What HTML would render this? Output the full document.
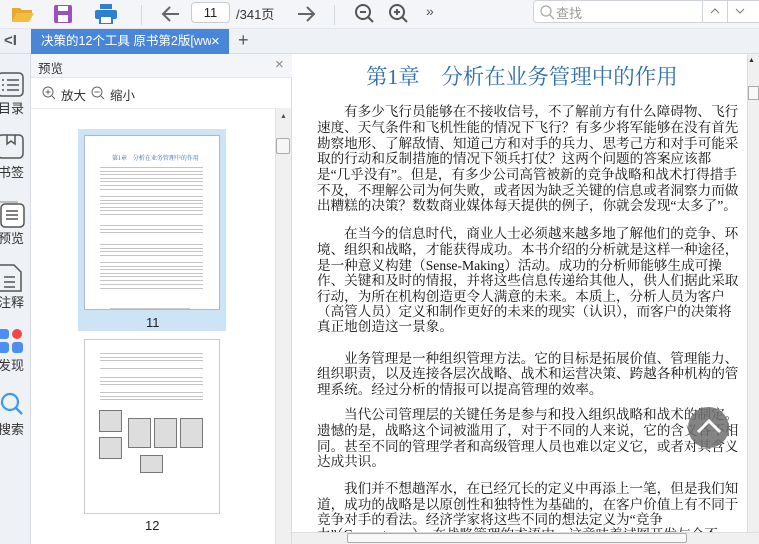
<!DOCTYPE html>
<html><head><meta charset="utf-8"><style>
*{margin:0;padding:0;box-sizing:border-box}
body{width:759px;height:544px;overflow:hidden;background:#fff;position:relative;font-family:"Liberation Sans","Noto Sans CJK SC",sans-serif}
.abs{position:absolute}
#tb{left:0;top:0;width:759px;height:29px;background:#f3f5f8;border-bottom:1px solid #e3e6ea}
#tabs{left:0;top:29px;width:759px;height:25px;background:#eef1f5;border-bottom:1px solid #d8dce2}
#side{left:0;top:54px;width:31px;height:490px;background:#eef1f5;border-right:1px solid #d8dce2}
#prev{left:31px;top:54px;width:261px;height:490px;background:#fff;border-right:1px solid #d8dce2}
.sl{position:absolute;left:-4px;width:30px;font-size:13px;color:#333;text-align:center}
.doc{position:absolute;left:317px;width:411px;font-family:"Liberation Serif","Noto Serif CJK SC",serif;font-size:13.6px;color:#111;white-space:nowrap;text-align:justify;text-align-last:justify;line-height:16px;overflow:visible}
.doc.e{text-align-last:left}
.doc.i{left:344px;width:384px}
.tl{position:absolute;height:1px;background:#bbb}
</style></head><body>
<div id="tb" class="abs"></div>
<svg class="abs" style="left:11px;top:5px" width="24" height="18"><path d="M1 3h8l2 2h10v3H6L1 17z" fill="#e8a930"/><path d="M6 8h17l-5 9H1z" fill="#f5bd3f"/></svg>
<svg class="abs" style="left:54px;top:5px" width="18" height="18"><rect x="0" y="0" width="18" height="18" rx="2" fill="#9a52c0"/><rect x="4" y="1" width="10" height="5" fill="#fff"/><rect x="4" y="10" width="10" height="7" fill="#fff"/></svg>
<svg class="abs" style="left:95px;top:4px" width="22" height="20"><rect x="5" y="0" width="12" height="5" fill="#2f7fd0"/><rect x="0" y="6" width="22" height="9" rx="2" fill="#2f7fd0"/><rect x="5" y="12" width="12" height="8" fill="#fff" stroke="#2f7fd0" stroke-width="2"/></svg>
<div class="abs" style="left:141px;top:5px;width:1px;height:20px;background:#d5d8dc"></div>
<svg class="abs" style="left:161px;top:5px" width="20" height="18"><path d="M18 9H3M9 2L2 9l7 7" stroke="#666" stroke-width="2" fill="none"/></svg>
<div class="abs" style="left:191px;top:2px;width:39px;height:21px;border:1px solid #c8ccd2;border-radius:4px;background:#fff;font-size:13px;text-align:center;line-height:19px;color:#222">11</div>
<div class="abs" style="left:236px;top:4px;font-size:13px;color:#333">/341页</div>
<svg class="abs" style="left:296px;top:5px" width="20" height="18"><path d="M2 9h15M11 2l7 7-7 7" stroke="#666" stroke-width="2" fill="none"/></svg>
<div class="abs" style="left:334px;top:5px;width:1px;height:20px;background:#d5d8dc"></div>
<svg class="abs" style="left:354px;top:3px" width="22" height="22"><circle cx="9" cy="9" r="7" stroke="#555" stroke-width="2" fill="none"/><path d="M6 9h6M14 14l5 5" stroke="#555" stroke-width="2"/></svg>
<svg class="abs" style="left:388px;top:3px" width="22" height="22"><circle cx="9" cy="9" r="7" stroke="#555" stroke-width="2" fill="none"/><path d="M6 9h6M9 6v6M14 14l5 5" stroke="#555" stroke-width="2"/></svg>
<div class="abs" style="left:426px;top:3px;font-size:14px;color:#555">»</div>
<div class="abs" style="left:533px;top:0;width:240px;height:23px;border:1px solid #cfd3d8;border-radius:4px;background:#fff"></div>
<svg class="abs" style="left:539px;top:4px" width="16" height="16"><circle cx="7" cy="7" r="5" stroke="#aaa" stroke-width="1.3" fill="none"/><path d="M11 11l4 4" stroke="#aaa" stroke-width="1.3"/></svg>
<div class="abs" style="left:556px;top:3px;font-size:13px;color:#999">查找</div>
<div class="abs" style="left:702px;top:0;width:1px;height:23px;background:#cfd3d8"></div>
<div class="abs" style="left:727px;top:0;width:1px;height:23px;background:#cfd3d8"></div>
<svg class="abs" style="left:710px;top:7px" width="10" height="8"><path d="M1 6l4-4 4 4" stroke="#777" fill="none"/></svg>
<svg class="abs" style="left:735px;top:7px" width="10" height="8"><path d="M1 2l4 4 4-4" stroke="#777" fill="none"/></svg>

<div id="tabs" class="abs"></div>
<div class="abs" style="left:4px;top:32px;font-size:15px;color:#555;font-weight:bold">&lt;I</div>
<div class="abs" style="left:31px;top:29px;width:198px;height:25px;background:#4a86d8;color:#fff;font-size:12.5px;line-height:25px;padding-left:10px;white-space:nowrap;overflow:hidden">决策的12个工具 原书第2版[www<span style="position:absolute;left:180px;top:0;background:#4a86d8;width:18px;font-size:15px">×</span></div>
<div class="abs" style="left:238px;top:30px;font-size:18px;color:#555">+</div>

<div id="side" class="abs"></div>
<svg class="abs" style="left:0;top:72px" width="24" height="26"><rect x="-2" y="1" width="25" height="23" rx="4" stroke="#555" stroke-width="1.5" fill="none"/><path d="M2 8h2M7 8h12M2 13h2M7 13h12M2 18h2M7 18h12" stroke="#555" stroke-width="1.6"/></svg>
<div class="sl" style="top:98px">目录</div>
<svg class="abs" style="left:0;top:134px" width="24" height="26"><rect x="-2" y="1" width="25" height="23" rx="4" stroke="#555" stroke-width="1.5" fill="none"/><path d="M7 1v9l4-3 4 3V1" stroke="#555" stroke-width="1.5" fill="none"/></svg>
<div class="sl" style="top:162px">书签</div>
<svg class="abs" style="left:0;top:200px" width="26" height="28"><rect x="1" y="4" width="23" height="23" rx="4" stroke="#555" stroke-width="1.5" fill="#fff"/><path d="M-2 2h20" stroke="#888"/><path d="M6 11h12M6 15h12M6 19h12" stroke="#555" stroke-width="1.6"/></svg>
<div class="sl" style="top:228px">预览</div>
<svg class="abs" style="left:0;top:264px" width="24" height="30"><path d="M-1 1h15l7 7v19h-22z" stroke="#555" stroke-width="1.5" fill="none"/><path d="M4 13h11M4 18h11M4 23h11" stroke="#555" stroke-width="1.5"/></svg>
<div class="sl" style="top:292px">注释</div>
<svg class="abs" style="left:0;top:327px" width="26" height="28"><rect x="-2" y="2" width="11" height="10" rx="3" fill="#4d8ef0"/><circle cx="17" cy="7" r="5" fill="#f04848"/><rect x="-2" y="15" width="11" height="11" rx="3" fill="#4d8ef0"/><rect x="12" y="15" width="11" height="11" rx="3" fill="#4d8ef0"/></svg>
<div class="sl" style="top:355px">发现</div>
<svg class="abs" style="left:0;top:392px" width="26" height="26"><circle cx="10" cy="10" r="8" stroke="#3d9be9" stroke-width="2.2" fill="none"/><path d="M16 16l6 6" stroke="#3d9be9" stroke-width="2.5"/></svg>
<div class="sl" style="top:419px">搜索</div>

<div id="prev" class="abs"></div>
<div class="abs" style="left:31px;top:54px;width:261px;height:24px;background:#f3f5f8;border-bottom:1px solid #e3e6ea"></div>
<div class="abs" style="left:38px;top:58px;font-size:12.5px;color:#333">预览</div>
<div class="abs" style="left:275px;top:56px;font-size:15px;color:#888">×</div>
<svg class="abs" style="left:42px;top:86px" width="14" height="14"><circle cx="6" cy="6" r="5" stroke="#666" fill="none"/><path d="M3.5 6h5M6 3.5v5M10 10l3 3" stroke="#666"/></svg>
<div class="abs" style="left:61px;top:85px;font-size:12.5px;color:#333">放大</div>
<svg class="abs" style="left:91px;top:86px" width="14" height="14"><circle cx="6" cy="6" r="5" stroke="#666" fill="none"/><path d="M3.5 6h5M10 10l3 3" stroke="#666"/></svg>
<div class="abs" style="left:110px;top:85px;font-size:12.5px;color:#333">缩小</div>
<div class="abs" style="left:31px;top:108px;width:244px;height:1px;background:#e8e8e8"></div>
<div class="abs" style="left:275px;top:108px;width:16px;height:436px;background:#f0f0f0;border-left:1px solid #e0e0e0"></div>
<div class="abs" style="left:280px;top:113px;font-size:7px;color:#555">▲</div>
<div class="abs" style="left:276px;top:138px;width:14px;height:16px;background:#f6f6f6;border:1px solid #aaa;border-radius:2px"></div>

<div class="abs" style="left:78px;top:129px;width:148px;height:202px;background:#cde4f7"></div>
<div class="abs" style="left:84px;top:135px;width:136px;height:175px;background:#fff;border:1px solid #b0b8c4"></div>
<div class="abs" style="left:112px;top:153px;font-size:6px;color:#2f6fad;font-family:'Noto Serif CJK SC',serif">第1章　分析在业务管理中的作用</div>
<div class="abs" style="left:146px;top:315px;font-size:13px;color:#222">11</div>
<div class="abs" style="left:84px;top:339px;width:136px;height:175px;background:#fff;border:1px solid #c8ccd2"></div>
<div class="abs" style="left:145px;top:518px;font-size:13px;color:#222">12</div>
<div id="thumb"></div>
<script>
var t='';
function lines(x,y,n,w,step,col){for(var i=0;i<n;i++){t+='<div class="tl" style="left:'+x+'px;top:'+(y+i*step)+'px;width:'+w+'px;background:'+(col||'#c4c4c4')+'"></div>';}}
[[167,7],[196,6],[225,3],[244,4],[262,6],[284,2]].forEach(function(a){lines(100,a[0],a[1],103,3.6);});
lines(110,308,1,80,3,'#ccc');
[[353,3],[368,1],[377,3],[392,3]].forEach(function(a){lines(100,a[0],a[1],103,3.6);});
document.getElementById('thumb').innerHTML=t;
</script>
<div class="abs" style="left:99px;top:410px;width:23px;height:22px;border:1px solid #777;background:#ddd"></div>
<div class="abs" style="left:99px;top:437px;width:23px;height:22px;border:1px solid #777;background:#ddd"></div>
<div class="abs" style="left:128px;top:418px;width:23px;height:30px;border:1px solid #777;background:#ddd"></div>
<div class="abs" style="left:154px;top:418px;width:23px;height:30px;border:1px solid #777;background:#ddd"></div>
<div class="abs" style="left:180px;top:418px;width:23px;height:30px;border:1px solid #777;background:#ddd"></div>
<div class="abs" style="left:140px;top:455px;width:23px;height:18px;border:1px solid #777;background:#ddd"></div>

<div class="abs" style="left:292px;top:54px;width:467px;height:490px;background:#fff"></div>
<div class="abs" style="left:366px;top:60px;font-family:'Liberation Serif','Noto Serif CJK SC',serif;font-size:21.5px;color:#2f6fad;white-space:nowrap">第1章　分析在业务管理中的作用</div>
<div class="doc i" style="top:104px">有多少飞行员能够在不接收信号，不了解前方有什么障碍物、飞行</div>
<div class="doc" style="top:120px">速度、天气条件和飞机性能的情况下飞行？有多少将军能够在没有首先</div>
<div class="doc" style="top:136px">勘察地形、了解敌情、知道己方和对手的兵力、思考己方和对手可能采</div>
<div class="doc e" style="top:151px">取的行动和反制措施的情况下领兵打仗？这两个问题的答案应该都</div>
<div class="doc" style="top:167px">是“几乎没有”。但是，有多少公司高管被新的竞争战略和战术打得措手</div>
<div class="doc" style="top:183px">不及，不理解公司为何失败，或者因为缺乏关键的信息或者洞察力而做</div>
<div class="doc e" style="top:198px">出糟糕的决策？数数商业媒体每天提供的例子，你就会发现“太多了”。</div>
<div class="doc i" style="top:226px">在当今的信息时代，商业人士必须越来越多地了解他们的竞争、环</div>
<div class="doc" style="top:242px">境、组织和战略，才能获得成功。本书介绍的分析就是这样一种途径，</div>
<div class="doc e" style="top:258px">是一种意义构建（Sense-Making）活动。成功的分析师能够生成可操</div>
<div class="doc" style="top:273px">作、关键和及时的情报，并将这些信息传递给其他人，供人们据此采取</div>
<div class="doc e" style="top:289px">行动，为所在机构创造更令人满意的未来。本质上，分析人员为客户</div>
<div class="doc" style="top:304px">（高管人员）定义和制作更好的未来的现实（认识），而客户的决策将</div>
<div class="doc e" style="top:319px">真正地创造这一景象。</div>
<div class="doc i" style="top:351px">业务管理是一种组织管理方法。它的目标是拓展价值、管理能力、</div>
<div class="doc" style="top:366px">组织职责，以及连接各层次战略、战术和运营决策、跨越各种机构的管</div>
<div class="doc e" style="top:382px">理系统。经过分析的情报可以提高管理的效率。</div>
<div class="doc i" style="top:407px">当代公司管理层的关键任务是参与和投入组织战略和战术的制定。</div>
<div class="doc" style="top:423px">遗憾的是，战略这个词被滥用了，对于不同的人来说，它的含义各不相</div>
<div class="doc" style="top:439px">同。甚至不同的管理学者和高级管理人员也难以定义它，或者对其含义</div>
<div class="doc e" style="top:454px">达成共识。</div>
<div class="doc i" style="top:481px">我们并不想趟浑水，在已经冗长的定义中再添上一笔，但是我们知</div>
<div class="doc" style="top:497px">道，成功的战略是以原创性和独特性为基础的，在客户价值上有不同于</div>
<div class="doc e" style="top:512px">竞争对手的看法。经济学家将这些不同的想法定义为“竞争</div>
<div class="doc e" style="top:527px">力”（Competency）。在战略管理的术语中，这意味着试图开发与众不</div>
<div class="abs" style="left:292px;top:532px;width:467px;height:12px;background:#f0f0f0;border-top:1px solid #ddd"></div>
<div class="abs" style="left:347px;top:533px;width:340px;height:10px;background:#f8f8f8;border:1px solid #aaa;border-radius:2px"></div>
<div class="abs" style="left:747px;top:54px;width:12px;height:478px;background:#f0f0f0;border-left:1px solid #ddd"></div>
<div class="abs" style="left:748px;top:57px;font-size:7px;color:#333">▲</div>
<div class="abs" style="left:748px;top:86px;width:11px;height:14px;background:#f8f8f8;border:1px solid #aaa"></div>
<div class="abs" style="left:688px;top:407px;width:41px;height:41px;border-radius:50%;background:rgba(110,110,110,0.85)"></div>
<svg class="abs" style="left:695px;top:416px" width="28" height="20"><path d="M3 16L14 5l11 11" stroke="#fff" stroke-width="3" fill="none"/></svg>
</body></html>
